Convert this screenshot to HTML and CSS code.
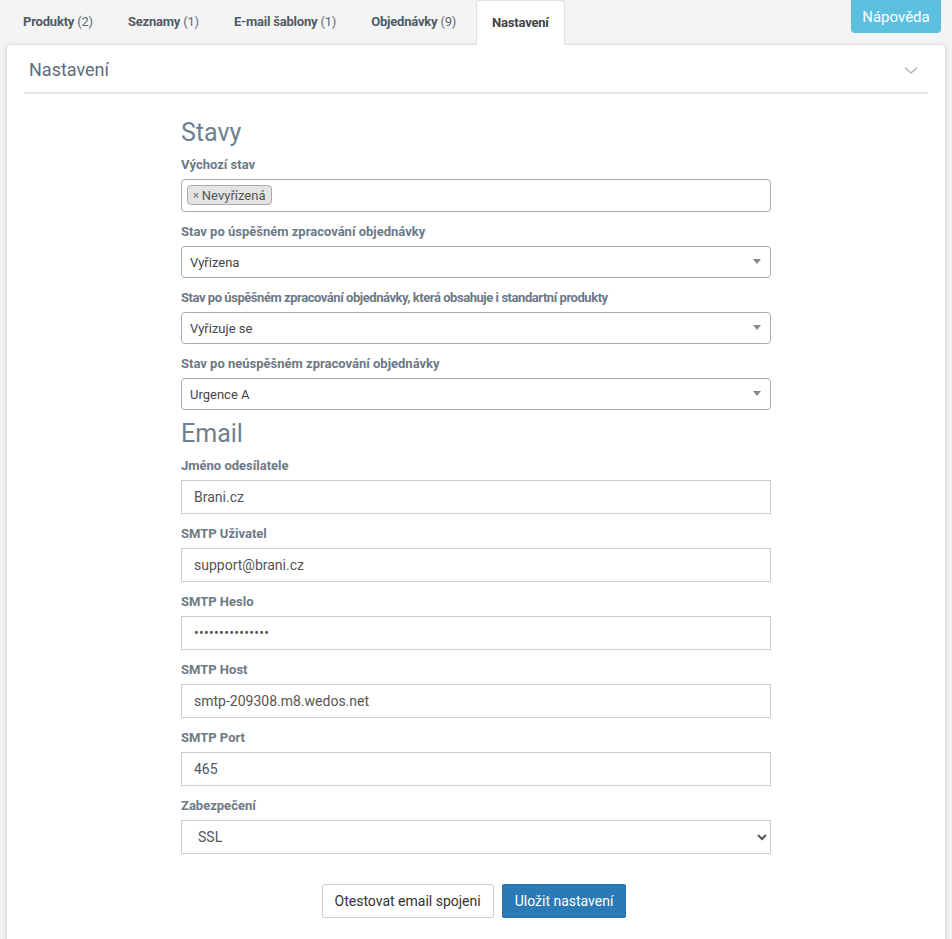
FILE: index.html
```html
<!DOCTYPE html>
<html lang="cs">
<head>
    <meta charset="UTF-8">
    <meta name="viewport" content="width=device-width, initial-scale=1.0">
    <title>Nastavení</title>
    <link rel="stylesheet" href="styles.css">
</head>
<body>
    <div class="topbar">
        <ul class="tabs">
            <li class="tab"><b>Produkty</b> (2)</li>
            <li class="tab"><b>Seznamy</b> (1)</li>
            <li class="tab"><b>E-mail šablony</b> (1)</li>
            <li class="tab"><b>Objednávky</b> (9)</li>
            <li class="tab active"><b>Nastavení</b></li>
        </ul>
        <button type="button" class="help-btn">Nápověda</button>
    </div>

    <div class="panel">
        <div class="panel-heading">
            <span class="panel-title">Nastavení</span>
            <svg class="chevron" width="14" height="9" viewBox="0 0 14 9">
                <polyline points="1,1.5 7,7 13,1.5" fill="none" stroke="#b5b5b5" stroke-width="1.6"/>
            </svg>
        </div>
        <div class="panel-body">
            <form class="settings-form">
                <h3>Stavy</h3>
                <div class="form-group">
                    <label>Výchozí stav</label>
                    <div class="multi-select">
                        <span class="tag"><span class="tag-x">×</span>Nevyřízená</span>
                    </div>
                </div>
                <div class="form-group">
                    <label>Stav po úspěšném zpracování objednávky</label>
                    <div class="fake-select"><span>Vyřizena</span><span class="arrow"></span></div>
                </div>
                <div class="form-group">
                    <label class="label-long">Stav po úspěšném zpracování objednávky, která obsahuje i standartní produkty</label>
                    <div class="fake-select"><span>Vyřizuje se</span><span class="arrow"></span></div>
                </div>
                <div class="form-group">
                    <label>Stav po neúspěšném zpracování objednávky</label>
                    <div class="fake-select"><span>Urgence A</span><span class="arrow"></span></div>
                </div>

                <h3>Email</h3>
                <div class="form-group">
                    <label for="sender">Jméno odesílatele</label>
                    <input type="text" id="sender" class="form-control" value="Brani.cz">
                </div>
                <div class="form-group">
                    <label for="smtp-user">SMTP Uživatel</label>
                    <input type="text" id="smtp-user" class="form-control" value="support@brani.cz">
                </div>
                <div class="form-group">
                    <label for="smtp-pass">SMTP Heslo</label>
                    <input type="password" id="smtp-pass" class="form-control password" value="heslo1234567890">
                </div>
                <div class="form-group">
                    <label for="smtp-host">SMTP Host</label>
                    <input type="text" id="smtp-host" class="form-control" value="smtp-209308.m8.wedos.net">
                </div>
                <div class="form-group">
                    <label for="smtp-port">SMTP Port</label>
                    <input type="text" id="smtp-port" class="form-control" value="465">
                </div>
                <div class="form-group">
                    <label for="security">Zabezpečení</label>
                    <select id="security" class="form-control">
                        <option>SSL</option>
                        <option>TLS</option>
                    </select>
                </div>

                <div class="actions">
                    <button type="button" class="btn btn-default">Otestovat email spojeni</button>
                    <button type="button" class="btn btn-primary">Uložit nastavení</button>
                </div>
            </form>
        </div>
    </div>
</body>
</html>
```

FILE: styles.css
```css
body {
    margin: 0;
    padding: 0 6px;
    background: #f4f4f4;
    font-family: Roboto, "Liberation Sans", sans-serif;
    color: #333;
}
.topbar {
    display: flex;
    align-items: flex-start;
    height: 44px;
}
.tabs {
    display: flex;
    list-style: none;
    margin: 0 0 0 2px;
    padding: 0;
}
.tab {
    height: 44px;
    line-height: 44px;
    padding: 0 15px;
    margin-right: 5px;
    font-size: 13px;
    letter-spacing: -0.2px;
    color: #5f6b76;
    box-sizing: border-box;
}
.tab b {
    color: #4f5b66;
}
.tab.active {
    background: #fff;
    border: 1px solid #e0e0e0;
    border-bottom: none;
    border-radius: 3px 3px 0 0;
    position: relative;
    z-index: 2;
    height: 45px;
    line-height: 43px;
}
.tab.active b {
    color: #444;
}
.help-btn {
    margin-left: auto;
    margin-right: 5px;
    width: 90px;
    height: 33px;
    border: none;
    border-radius: 0 0 4px 4px;
    background: #5bc0de;
    color: #fff;
    font-family: inherit;
    font-size: 15px;
}
.panel {
    background: #fff;
    border: 1px solid #e2e2e2;
    border-radius: 4px;
    box-shadow: 0 1px 4px rgba(0, 0, 0, 0.12);
    min-height: 900px;
}
.panel-heading {
    display: flex;
    justify-content: space-between;
    align-items: center;
    margin: 0 17px;
    padding: 13px 10px 10px 5px;
    border-bottom: 2px solid #e8e8e8;
}
.panel-title {
    font-size: 18px;
    line-height: 24px;
    color: #5d6d7c;
}
.chevron {
    margin-top: 1px;
}
.panel-body {
    padding: 25px 0 20px;
}
.settings-form {
    width: 590px;
    margin: 0 auto;
}
h3 {
    margin: 0 0 9px;
    padding-top: 1px;
    font-size: 25px;
    line-height: 26px;
    font-weight: 400;
    color: #6e7f8f;
}
.form-group {
    margin-bottom: 10px;
}
label {
    display: block;
    padding-top: 1px;
    margin-bottom: 5px;
    font-size: 13px;
    line-height: 18px;
    font-weight: bold;
    color: #6d7986;
}
.label-long {
    letter-spacing: -0.45px;
}
.multi-select {
    height: 33px;
    box-sizing: border-box;
    border: 1px solid #aaa;
    border-radius: 4px;
    padding: 5px 5px;
    display: flex;
    align-items: flex-start;
}
.tag {
    display: inline-flex;
    align-items: center;
    height: 20px;
    box-sizing: border-box;
    padding: 0 5px;
    background: #e4e4e4;
    border: 1px solid #aaa;
    border-radius: 4px;
    font-size: 13px;
    color: #555;
}
.tag-x {
    color: #888;
    font-weight: bold;
    font-size: 11px;
    margin-right: 3px;
}
.fake-select {
    height: 32px;
    box-sizing: border-box;
    border: 1px solid #aaa;
    border-radius: 4px;
    padding: 0 8px;
    display: flex;
    align-items: center;
    justify-content: space-between;
    font-size: 13px;
    color: #444;
}
.arrow {
    width: 0;
    height: 0;
    border-left: 4px solid transparent;
    border-right: 4px solid transparent;
    border-top: 5px solid #888;
    margin-right: 1px;
    margin-top: -2px;
}
.form-control {
    display: block;
    width: 100%;
    height: 34px;
    box-sizing: border-box;
    padding: 6px 12px;
    border: 1px solid #ccc;
    border-radius: 0;
    background: #fff;
    font-family: inherit;
    font-size: 14px;
    color: #555;
}
.password {
    letter-spacing: 0.3px;
}
.actions {
    display: flex;
    justify-content: center;
    gap: 8px;
    margin-top: 30px;
    padding-right: 4px;
}
.btn {
    height: 34px;
    padding: 6px 12px;
    border: 1px solid #ccc;
    border-radius: 2px;
    font-family: inherit;
    font-size: 14px;
}
.btn-default {
    background: #fff;
    color: #333;
}
.btn-primary {
    background: #2b7ab6;
    border-color: #2a6fa6;
    color: #fff;
}
```
